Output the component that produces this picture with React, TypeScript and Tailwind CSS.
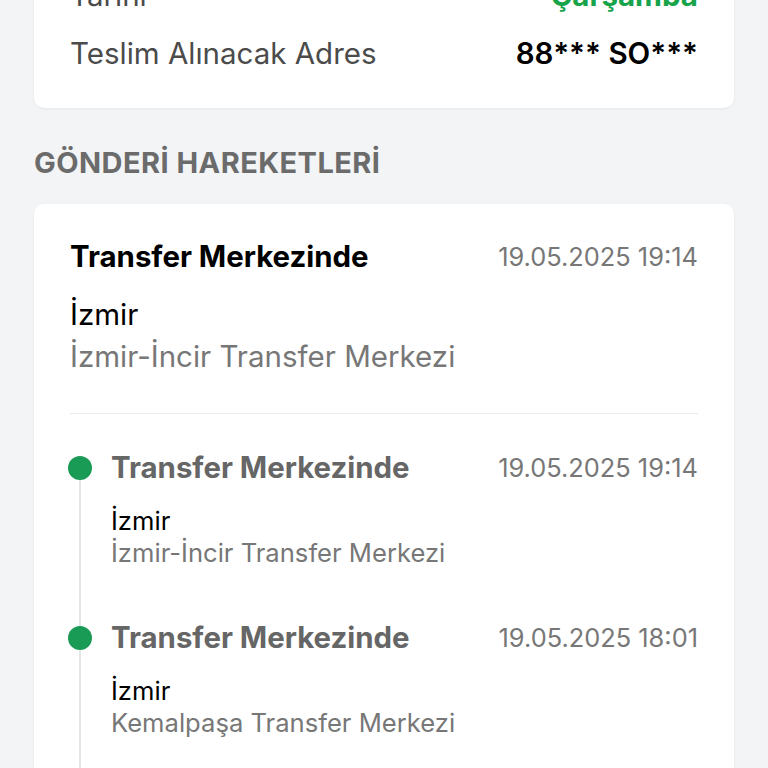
const events = [
  { title: 'Transfer Merkezinde', date: '19.05.2025 19:14', city: 'İzmir', place: 'İzmir-İncir Transfer Merkezi' },
  { title: 'Transfer Merkezinde', date: '19.05.2025 18:01', city: 'İzmir', place: 'Kemalpaşa Transfer Merkezi' },
  { title: 'Transfer Merkezinde', date: '19.05.2025 16:40', city: 'İzmir', place: 'Kemalpaşa Transfer Merkezi' },
]

export default function App() {
  return (
    <div className="h-[768px] overflow-hidden bg-[#f3f4f6] px-[34px] font-['Inter',sans-serif]">
      <div className="-mt-[34px] rounded-b-[10px] bg-white px-[36px] pb-[26px] shadow-[0_1px_3px_rgba(0,0,0,0.06)]">
        <div className="flex h-[58px] items-center justify-between text-[29.5px]">
          <span className="text-[#4b4b4b]">Tarihi</span>
          <span className="font-bold text-[#16a34a]">Çarşamba</span>
        </div>
        <div className="flex h-[58px] items-center justify-between text-[29.5px]">
          <span className="text-[#4b4b4b]">Teslim Alınacak Adres</span>
          <span className="font-semibold text-black">88*** SO***</span>
        </div>
      </div>

      <h2 className="mt-[37px] text-[29px] leading-[36px] font-bold tracking-[0.45px] uppercase text-[#6b6b6b]">
        GÖNDERİ HAREKETLERİ
      </h2>

      <div className="mt-[23px] rounded-[10px] bg-white px-[36px] pt-[35px] shadow-[0_1px_3px_rgba(0,0,0,0.06)]">
        <div className="flex items-center justify-between leading-[36px]">
          <span className="text-[29.4px] font-bold text-black">Transfer Merkezinde</span>
          <span className="text-[25.4px] text-[#777]">19.05.2025 19:14</span>
        </div>
        <p className="mt-[20px] text-[29.5px] leading-[38px] text-black">İzmir</p>
        <p className="text-[29.5px] leading-[46px] text-[#777]">İzmir-İncir Transfer Merkezi</p>
        <div className="mt-[34px] h-px bg-[#ececec]" />

        <div className="pt-[36px]">
          {events.map((e, i) => (
            <div key={i} className="flex gap-[19px] pb-[51px]">
              <div className="relative -ml-[2px] flex w-[24px] shrink-0 justify-center">
                <div className="absolute top-[18px] bottom-[-69px] w-[2px] bg-[#e5e5e5]" />
                <div className="relative mt-[6px] h-[24px] w-[24px] rounded-full bg-[#1a9b55]" />
              </div>
              <div className="min-w-0 flex-1">
                <div className="flex items-center justify-between leading-[36px]">
                  <span className="text-[29.4px] font-bold text-[#666]">{e.title}</span>
                  <span className="text-[25.4px] text-[#777]">{e.date}</span>
                </div>
                <p className="mt-[19px] text-[25.6px] leading-[32px] text-black">{e.city}</p>
                <p className="text-[25.6px] leading-[32px] text-[#777]">{e.place}</p>
              </div>
            </div>
          ))}
        </div>
      </div>
    </div>
  )
}
